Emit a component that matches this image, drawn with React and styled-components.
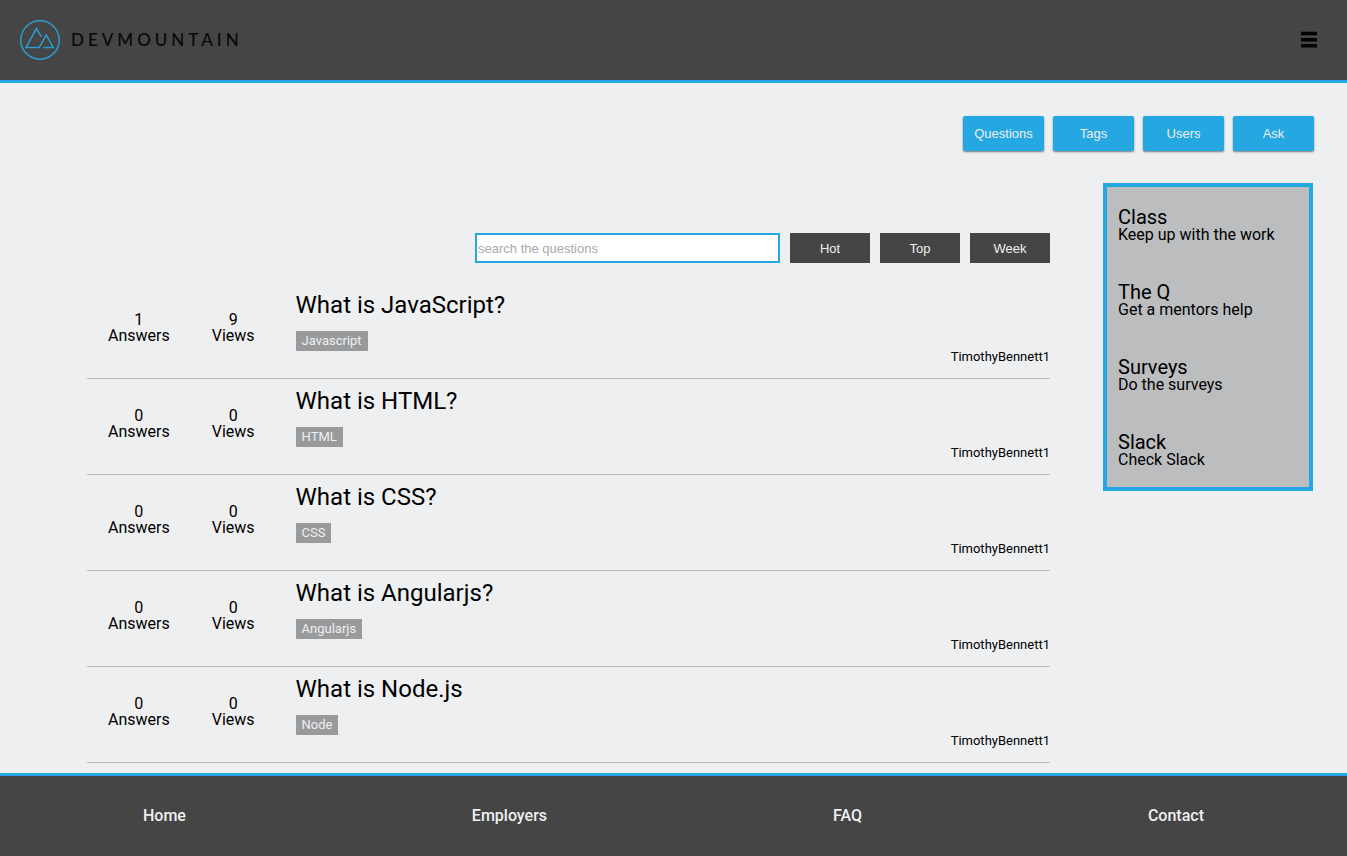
import React from 'react';
import styled, { createGlobalStyle } from 'styled-components';

const blue = '#25a7e2';
const dark = '#454545';
const pale = '#eeeff1';

const GlobalStyle = createGlobalStyle`
  *, *::before, *::after { box-sizing: border-box; }
  body {
    margin: 0;
    background: ${pale};
    color: #000;
    font-family: Roboto, "Liberation Sans", sans-serif;
    font-size: 16px;
    line-height: 16px;
  }
  h2, p, ul { margin: 0; padding: 0; }
  ul { list-style: none; }
  a { color: inherit; text-decoration: none; }
  button, input { font-family: "Liberation Sans", Arial, sans-serif; font-size: 13px; }
`;

const Page = styled.div`
  display: flex;
  flex-direction: column;
  min-height: 100vh;
`;

const Header = styled.header`
  display: flex;
  align-items: center;
  justify-content: space-between;
  height: 83px;
  padding: 0 30px 0 20px;
  background: ${dark};
  border-bottom: 3px solid ${blue};
`;

const Brand = styled.a`
  display: flex;
  align-items: center;
  gap: 11px;
`;

const Wordmark = styled.span`
  color: #080808;
  font-family: Lato, sans-serif;
  font-size: 17px;
  font-weight: 500;
  line-height: 20px;
  letter-spacing: 4px;
`;

const MenuButton = styled.button`
  display: flex;
  padding: 0;
  border: 0;
  background: none;
  cursor: pointer;
`;

const MainNav = styled.nav`
  display: flex;
  justify-content: flex-end;
  gap: 9px;
  padding: 33px 33px 32px;
`;

const NavButton = styled.button`
  width: 81px;
  height: 35px;
  padding: 0;
  border: 0;
  border-radius: 2px;
  background: ${blue};
  color: ${pale};
  box-shadow: 0 1px 2px rgba(0, 0, 0, 0.5);
  cursor: pointer;
`;

const Content = styled.div`
  display: flex;
  flex: 1;
  align-items: flex-start;
  gap: 53px;
  padding: 0 34px 10px 87px;
`;

const Questions = styled.main`
  flex: 1;
  padding-top: 50px;
`;

const Filters = styled.form`
  display: flex;
  justify-content: flex-end;
  gap: 10px;
  margin-bottom: 20px;
`;

const SearchInput = styled.input`
  width: 305px;
  height: 30px;
  padding: 1px;
  border: 2px solid ${blue};
  border-radius: 0;
  background: #fff;
  &::placeholder { color: #a9a9a9; }
`;

const FilterButton = styled.button`
  width: 80px;
  height: 30px;
  padding: 0;
  border: 0;
  background: ${dark};
  color: ${pale};
  cursor: pointer;
`;

const QuestionRow = styled.li`
  display: flex;
  height: 96px;
  border-bottom: 1px solid #bbbdbf;
`;

const Stat = styled.p`
  display: flex;
  flex-direction: column;
  padding: 29px 21px 0;
  text-align: center;
`;

const QuestionBody = styled.div`
  display: flex;
  flex: 1;
  flex-direction: column;
  align-items: flex-start;
  padding: 8px 0 0 20px;
`;

const QuestionTitle = styled.h2`
  font-size: 24px;
  font-weight: 400;
  line-height: 28px;
`;

const Tag = styled.a`
  margin-top: 12px;
  padding: 0 6px;
  background: #999a9c;
  color: ${pale};
  font-size: 13px;
  line-height: 20px;
`;

const Author = styled.a`
  align-self: flex-end;
  font-size: 13px;
  line-height: 12px;
`;

const Sidebar = styled.aside`
  width: 210px;
  padding: 20px 11px 19px;
  border: 4px solid ${blue};
  background: #bbbdbf;
`;

const SideList = styled.ul`
  display: flex;
  flex-direction: column;
  gap: 39px;
`;

const SideLink = styled.a`
  display: block;
`;

const SideTitle = styled.span`
  display: block;
  font-size: 20px;
  line-height: 20px;
`;

const SideText = styled.span`
  display: block;
`;

const Footer = styled.footer`
  display: flex;
  align-items: center;
  justify-content: space-around;
  height: 83px;
  border-top: 3px solid ${blue};
  background: ${dark};
  color: ${pale};
  font-weight: 500;
`;

const Logo = () => (
  <svg width="40" height="40" viewBox="0 0 40 40" fill="none" stroke="#2b9dd2" strokeWidth="1.5" aria-hidden="true">
    <circle cx="20" cy="20" r="19.2" />
    <path d="M21.3 16.8 L16.4 8.6 L6.1 27.4 H19.3 L26.2 15 L33.2 27.4 H23.2" />
  </svg>
);

const MenuIcon = () => (
  <svg width="16" height="18" viewBox="0 0 16 18" fill="#000" aria-hidden="true">
    <path d="M0 .8h16v3.4H0zM0 7h16v3.4H0zM0 13h16v3.4H0z" />
  </svg>
);

const navItems = ['Questions', 'Tags', 'Users', 'Ask'];
const filters = ['Hot', 'Top', 'Week'];
const footerItems = ['Home', 'Employers', 'FAQ', 'Contact'];

const questions = [
  { title: 'What is JavaScript?', tag: 'Javascript', answers: 1, views: 9 },
  { title: 'What is HTML?', tag: 'HTML', answers: 0, views: 0 },
  { title: 'What is CSS?', tag: 'CSS', answers: 0, views: 0 },
  { title: 'What is Angularjs?', tag: 'Angularjs', answers: 0, views: 0 },
  { title: 'What is Node.js', tag: 'Node', answers: 0, views: 0 },
];

const sideItems = [
  ['Class', 'Keep up with the work'],
  ['The Q', 'Get a mentors help'],
  ['Surveys', 'Do the surveys'],
  ['Slack', 'Check Slack'],
];

export default function App() {
  return (
    <Page>
      <GlobalStyle />
      <Header>
        <Brand href="#">
          <Logo />
          <Wordmark>DEVMOUNTAIN</Wordmark>
        </Brand>
        <MenuButton type="button" aria-label="Menu">
          <MenuIcon />
        </MenuButton>
      </Header>
      <MainNav>
        {navItems.map((item) => (
          <NavButton type="button" key={item}>{item}</NavButton>
        ))}
      </MainNav>
      <Content>
        <Questions>
          <Filters onSubmit={(e) => e.preventDefault()}>
            <SearchInput type="text" placeholder="search the questions" aria-label="search the questions" />
            {filters.map((item) => (
              <FilterButton type="button" key={item}>{item}</FilterButton>
            ))}
          </Filters>
          <ul>
            {questions.map((q) => (
              <QuestionRow key={q.title}>
                <Stat><span>{q.answers}</span><span>Answers</span></Stat>
                <Stat><span>{q.views}</span><span>Views</span></Stat>
                <QuestionBody>
                  <QuestionTitle><a href="#">{q.title}</a></QuestionTitle>
                  <Tag href="#">{q.tag}</Tag>
                  <Author href="#">TimothyBennett1</Author>
                </QuestionBody>
              </QuestionRow>
            ))}
          </ul>
        </Questions>
        <Sidebar>
          <SideList>
            {sideItems.map(([title, text]) => (
              <li key={title}>
                <SideLink href="#">
                  <SideTitle>{title}</SideTitle>
                  <SideText>{text}</SideText>
                </SideLink>
              </li>
            ))}
          </SideList>
        </Sidebar>
      </Content>
      <Footer>
        {footerItems.map((item) => (
          <a href="#" key={item}>{item}</a>
        ))}
      </Footer>
    </Page>
  );
}
